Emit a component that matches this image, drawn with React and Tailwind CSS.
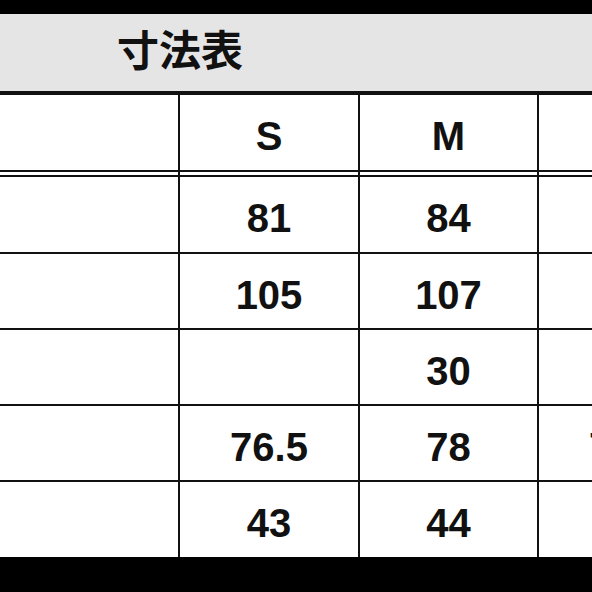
const cols = "grid grid-cols-[178px_178px_177px_178px] gap-x-[2px] bg-[#111]";

// size rows: S, M, L (only the start of one L value shows inside the frame)
const rows = [
  ["81", "84", ""],
  ["105", "107", ""],
  ["", "30", ""],
  ["76.5", "78", "79.5"],
  ["43", "44", ""],
];

function Cell({ children, h = "h-[74px]" }) {
  return (
    <div className={`${h} bg-white flex items-center justify-center whitespace-nowrap pt-[7px]`}>
      {children}
    </div>
  );
}

function Row({ values, h }) {
  return (
    <div className={cols}>
      <Cell h={h} />
      {values.map((v, i) => (
        <Cell key={i} h={h}>
          {v}
        </Cell>
      ))}
    </div>
  );
}

export default function App() {
  return (
    <div
      className="w-[592px] h-[592px] overflow-hidden bg-black flex flex-col text-[40px] font-bold text-[#111] leading-none"
      style={{ fontFamily: '"Liberation Sans", Arial, sans-serif' }}
    >
      {/* top frame */}
      <div className="h-[14px] shrink-0 bg-black" />

      {/* title bar */}
      <div className="h-[77px] shrink-0 bg-[#e6e5e6] flex items-center pl-[117px] pb-[9px]">
        <span
          className="text-[42px] font-bold text-[#111]"
          style={{ fontFamily: '"Noto Sans CJK JP", "Noto Sans CJK SC", sans-serif' }}
        >
          寸法表
        </span>
      </div>
      <div className="h-[4px] shrink-0 bg-[#111]" />

      {/* header row */}
      <Row values={["S", "M", ""]} h="h-[75px]" />
      <div className="h-[2px] shrink-0 bg-[#111]" />
      <Row values={["", "", ""]} h="h-[3px] !pt-0" />
      <div className="h-[2px] shrink-0 bg-[#111]" />

      {rows.map((r, i) => (
        <div key={i} className="shrink-0">
          {i > 0 && <div className="h-[2px] bg-[#111]" />}
          <Row values={r} h={i === 0 || i === rows.length - 1 ? "h-[75px]" : "h-[74px]"} />
        </div>
      ))}

      {/* bottom frame */}
      <div className="flex-1 bg-black" />
    </div>
  );
}
